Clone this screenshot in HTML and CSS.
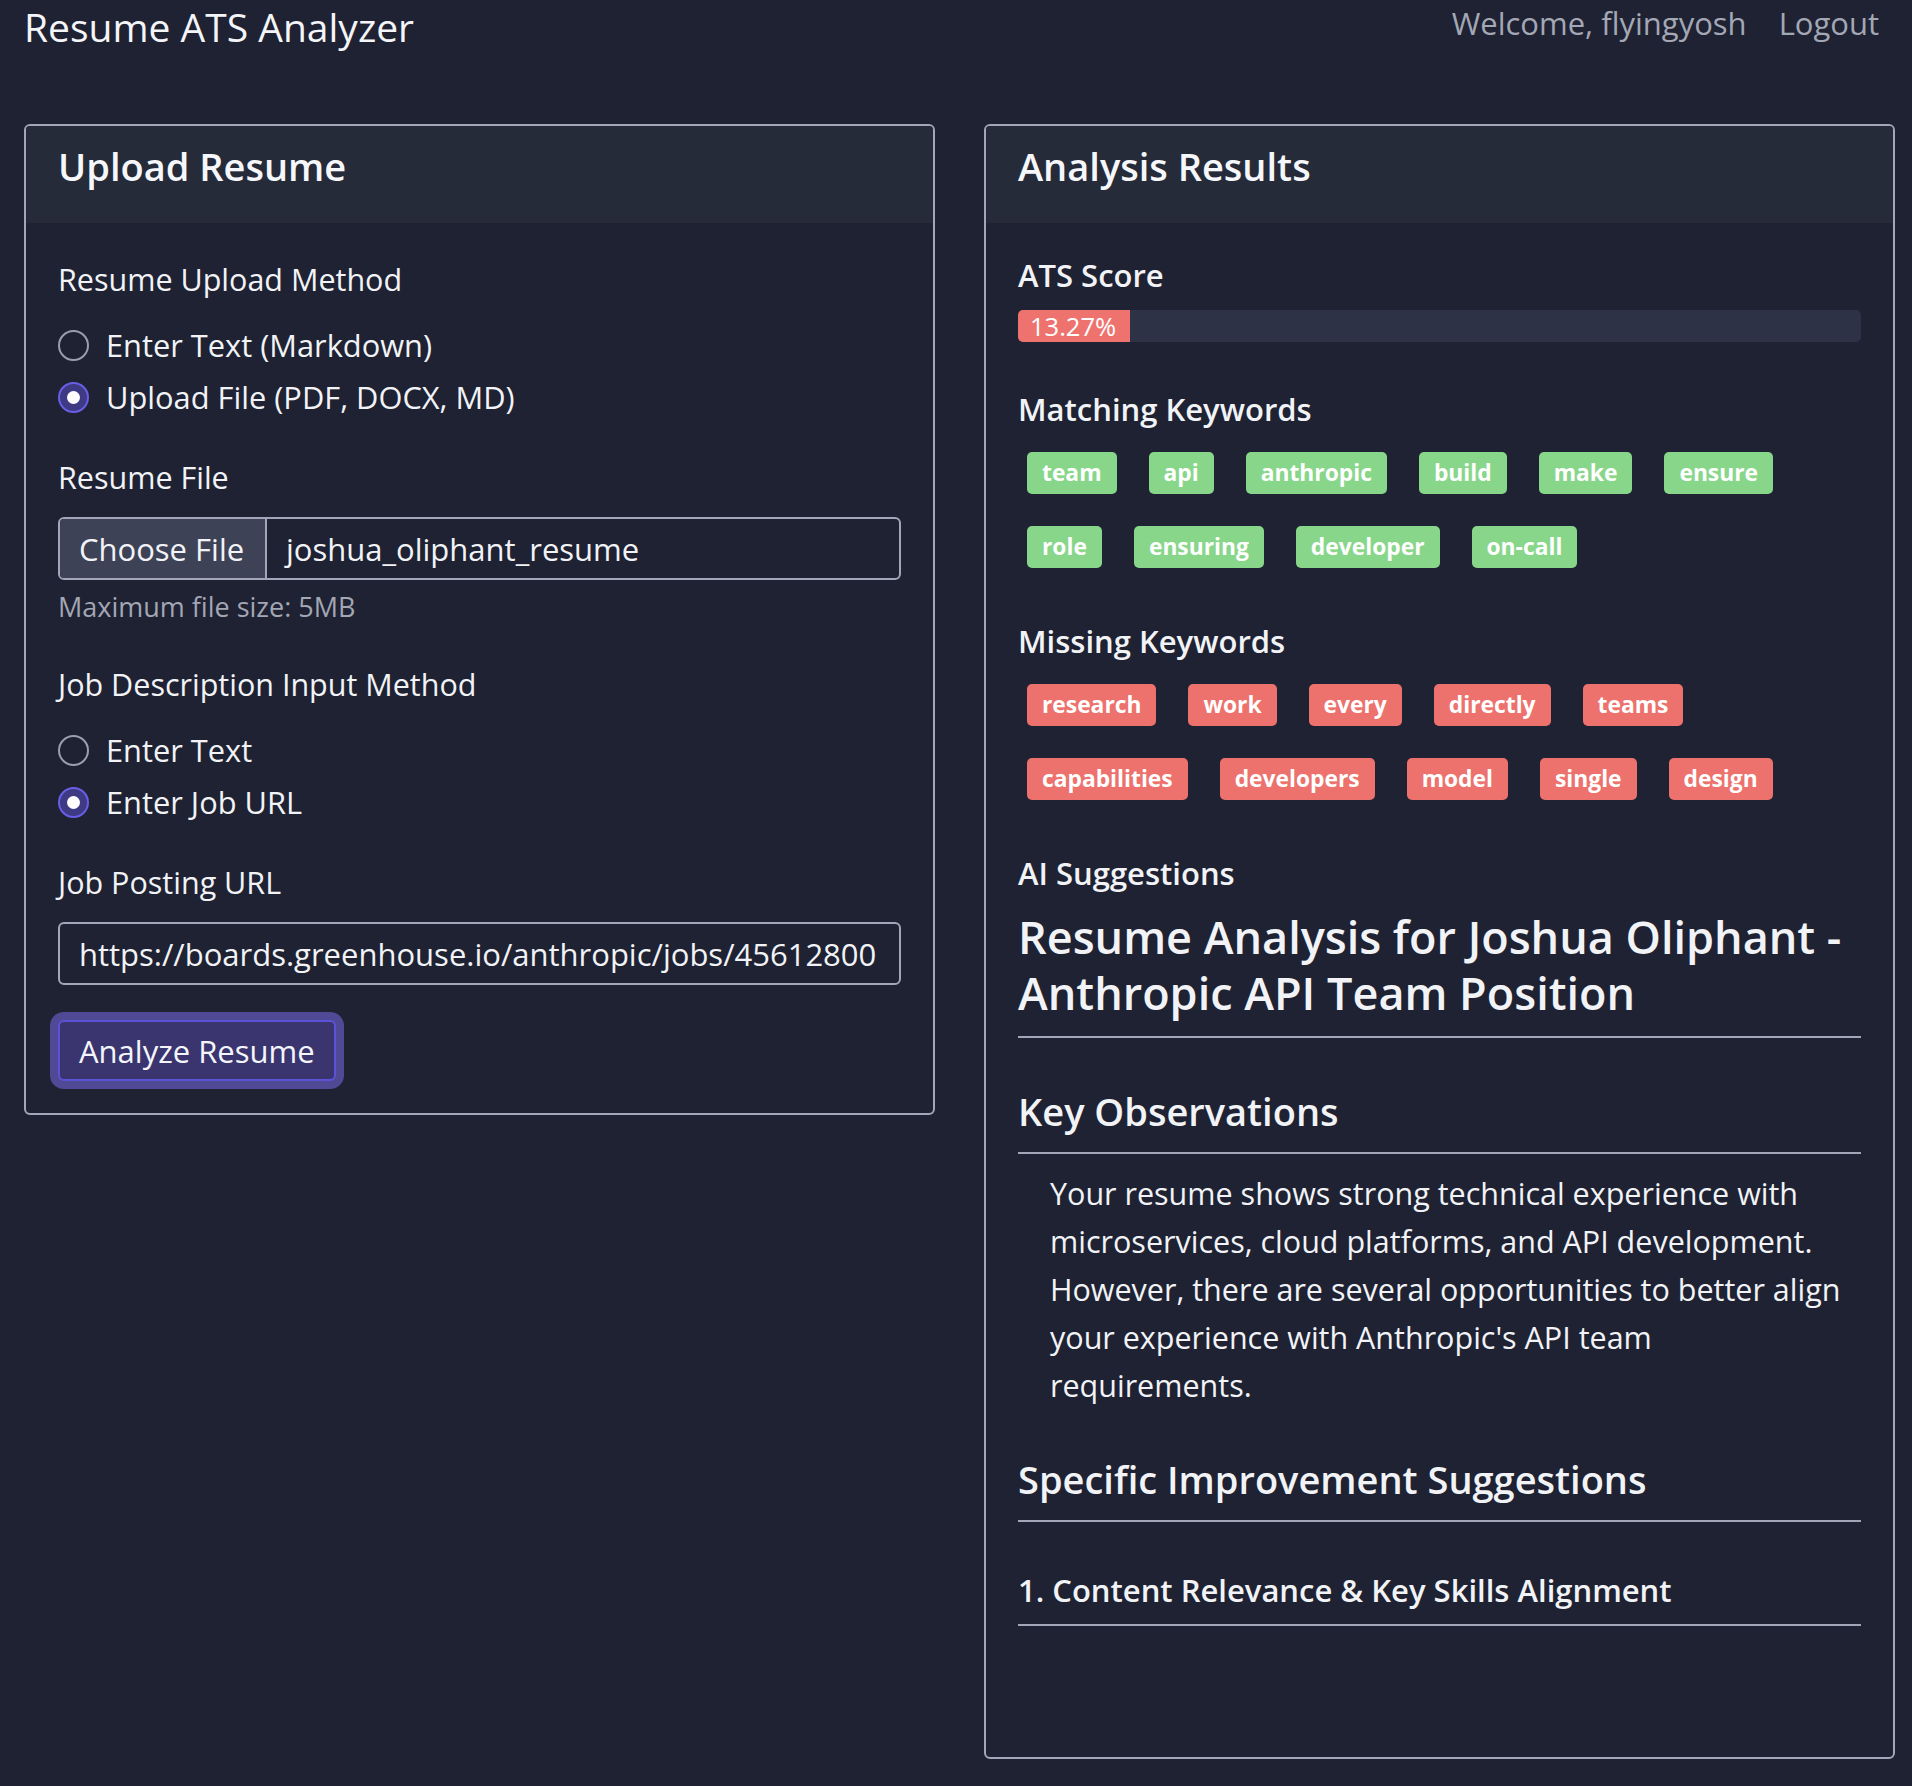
FILE: index.html
```html
<!DOCTYPE html>
<html lang="en">
<head>
<meta charset="utf-8">
<title>Resume ATS Analyzer</title>
<link rel="stylesheet" href="styles.css">
</head>
<body>
<header class="topbar">
  <div class="brand">Resume ATS Analyzer</div>
  <nav class="user-nav">
    <span class="welcome">Welcome, flyingyosh</span>
    <a class="logout" href="#">Logout</a>
  </nav>
</header>

<main class="layout">
  <section class="card">
    <div class="card-header"><h2 class="card-title">Upload Resume</h2></div>
    <div class="card-body">
      <div class="group">
        <div class="label">Resume Upload Method</div>
        <label class="radio-row"><input type="radio" name="rmethod" class="radio"><span>Enter Text (Markdown)</span></label>
        <label class="radio-row"><input type="radio" name="rmethod" class="radio" checked><span>Upload File (PDF, DOCX, MD)</span></label>
      </div>
      <div class="group group-file">
        <div class="label label-field">Resume File</div>
        <div class="file-input">
          <span class="file-btn">Choose File</span>
          <span class="file-name">joshua_oliphant_resume</span>
        </div>
        <div class="hint">Maximum file size: 5MB</div>
      </div>
      <div class="group">
        <div class="label">Job Description Input Method</div>
        <label class="radio-row"><input type="radio" name="jmethod" class="radio"><span>Enter Text</span></label>
        <label class="radio-row"><input type="radio" name="jmethod" class="radio" checked><span>Enter Job URL</span></label>
      </div>
      <div class="group">
        <div class="label label-field">Job Posting URL</div>
        <div class="text-input">https://boards.greenhouse.io/anthropic/jobs/45612800</div>
      </div>
      <button class="analyze-btn" type="button">Analyze Resume</button>
    </div>
  </section>

  <section class="card card-results">
    <div class="card-header"><h2 class="card-title">Analysis Results</h2></div>
    <div class="card-body results-body">
      <h3 class="section-title first">ATS Score</h3>
      <div class="progress">
        <div class="progress-fill" style="width: 13.27%">13.27%</div>
      </div>

      <h3 class="section-title">Matching Keywords</h3>
      <div class="tags">
        <span class="tag tag-match">team</span>
        <span class="tag tag-match">api</span>
        <span class="tag tag-match">anthropic</span>
        <span class="tag tag-match">build</span>
        <span class="tag tag-match">make</span>
        <span class="tag tag-match">ensure</span>
        <span class="tag tag-match">role</span>
        <span class="tag tag-match">ensuring</span>
        <span class="tag tag-match">developer</span>
        <span class="tag tag-match">on-call</span>
      </div>

      <h3 class="section-title">Missing Keywords</h3>
      <div class="tags">
        <span class="tag tag-miss">research</span>
        <span class="tag tag-miss">work</span>
        <span class="tag tag-miss">every</span>
        <span class="tag tag-miss">directly</span>
        <span class="tag tag-miss">teams</span>
        <span class="tag tag-miss">capabilities</span>
        <span class="tag tag-miss">developers</span>
        <span class="tag tag-miss">model</span>
        <span class="tag tag-miss">single</span>
        <span class="tag tag-miss">design</span>
      </div>

      <h3 class="section-title">AI Suggestions</h3>
      <div class="suggestions">
        <h1 class="md-h1">Resume Analysis for Joshua Oliphant - Anthropic API Team Position</h1>
        <h2 class="md-h2">Key Observations</h2>
        <p class="md-p">Your resume shows strong technical experience with microservices, cloud platforms, and API development. However, there are several opportunities to better align your experience with Anthropic's API team requirements.</p>
        <h2 class="md-h2">Specific Improvement Suggestions</h2>
        <h3 class="md-h3">1. Content Relevance &amp; Key Skills Alignment</h3>
      </div>
    </div>
  </section>
</main>
</body>
</html>
```

FILE: styles.css
```css
* { box-sizing: border-box; }

html, body {
  margin: 0;
  padding: 0;
  background: #1e2233;
}

body {
  font-family: "Open Sans", "Roboto", "Liberation Sans", sans-serif;
  color: #f2f3f6;
  min-height: 1786px;
}

.topbar {
  display: flex;
  justify-content: space-between;
  align-items: flex-start;
  height: 53px;
  padding: 0 33px 0 24px;
}

.brand {
  font-size: 39px;
  line-height: 53px;
  color: #f4f5f8;
}

.user-nav {
  display: flex;
  gap: 32px;
  align-items: center;
  padding-top: 1px;
}

.welcome, .logout {
  font-size: 31px;
  line-height: 44px;
  color: #a4a7b4;
  text-decoration: none;
}

.layout {
  display: grid;
  grid-template-columns: 1fr 1fr;
  column-gap: 49px;
  align-items: start;
  padding: 71px 17px 0 24px;
}

.card {
  border: 2px solid #a2a6b8;
  border-radius: 6px;
  overflow: hidden;
}

.card-header {
  background: #262b3a;
  height: 97px;
  padding: 17px 32px 0;
}

.card-title {
  margin: 0;
  font-size: 38px;
  line-height: 46px;
  font-weight: 600;
  color: #f6f7fa;
}

.card-body {
  padding: 34px 32px 32px;
}

.group {
  margin-bottom: 32px;
}

.group-file {
  padding-bottom: 4px;
}

.label {
  font-size: 30.5px;
  line-height: 45px;
  margin-bottom: 17px;
}

.label-field {
  margin-bottom: 17px;
}

.radio-row {
  display: flex;
  align-items: center;
  gap: 17px;
  height: 52px;
  font-size: 30.8px;
}

.radio {
  appearance: none;
  -webkit-appearance: none;
  margin: 0;
  width: 31px;
  height: 31px;
  border-radius: 50%;
  border: 2px solid #9a9eae;
  background: transparent;
  display: grid;
  place-items: center;
  flex: none;
}

.radio:checked {
  border-color: #6a5ee6;
  background: #3e3a84;
}

.radio:checked::after {
  content: "";
  width: 13px;
  height: 13px;
  border-radius: 50%;
  background: #ffffff;
}

.file-input {
  display: flex;
  height: 63px;
  border: 2px solid #a2a6b8;
  border-radius: 6px;
  overflow: hidden;
}

.file-btn {
  display: flex;
  align-items: center;
  padding: 0 19px;
  width: 207px;
  background: #3d4257;
  border-right: 2px solid #a2a6b8;
  font-size: 31px;
  flex: none;
  white-space: nowrap;
}

.file-name {
  display: flex;
  align-items: center;
  padding: 0 19px;
  font-size: 31px;
}

.group-file .hint {
  margin-top: 7px;
}

.hint {
  font-size: 27px;
  line-height: 39px;
  color: #a3a6b3;
}

.text-input {
  height: 63px;
  border: 2px solid #a2a6b8;
  border-radius: 6px;
  padding: 0 19px;
  display: flex;
  align-items: center;
  font-size: 31px;
  white-space: nowrap;
  overflow: hidden;
}

.analyze-btn {
  margin: 3px 0 0;
  height: 61px;
  padding: 0 19px;
  font-family: inherit;
  font-size: 31px;
  color: #f4f5fa;
  background: #3a356e;
  border: 2px solid #5c52d6;
  border-radius: 6px;
  box-shadow: 0 0 0 8px #504a96;
}

/* Results */
.results-body {
  padding: 30px 32px 0;
  height: 1534px;
}

.section-title {
  margin: 45px 0 0;
  font-size: 31px;
  line-height: 45px;
  font-weight: 600;
}

.section-title.first {
  margin-top: 0;
}

.progress {
  margin-top: 12px;
  height: 32px;
  background: #2d3246;
  border-radius: 5px;
  overflow: hidden;
}

.progress-fill {
  height: 100%;
  background: #ee736f;
  color: #ffffff;
  font-size: 25.5px;
  line-height: 32px;
  padding-left: 12px;
  white-space: nowrap;
}

.tags {
  display: flex;
  flex-wrap: wrap;
  gap: 32px;
  margin-top: 20px;
  padding-left: 9px;
}

.tag {
  height: 42px;
  padding: 0 15px;
  border-radius: 5px;
  font-size: 22.8px;
  line-height: 42px;
  font-weight: 700;
  color: #ffffff;
}

.tag-match { background: #88d68a; }
.tag-miss { background: #ed716c; }

.tags + .section-title { margin-top: 51px; }

.suggestions {
  margin-top: 13px;
}

.md-h1 {
  margin: 0;
  font-size: 45px;
  line-height: 56px;
  font-weight: 600;
  padding-bottom: 15px;
  border-bottom: 2px solid #a2a6b8;
}

.md-h2 {
  margin: 49px 0 0;
  font-size: 38px;
  line-height: 48px;
  font-weight: 600;
  padding-bottom: 17px;
  border-bottom: 2px solid #a2a6b8;
}

.md-p {
  margin: 15px 16px 0 32px;
  font-size: 30.5px;
  line-height: 48px;
}

.md-p + .md-h2 {
  margin-top: 46px;
}

.md-h3 {
  margin: 46px 0 0;
  font-size: 31px;
  line-height: 45px;
  font-weight: 600;
  padding-bottom: 11px;
  border-bottom: 2px solid #a2a6b8;
}
```
